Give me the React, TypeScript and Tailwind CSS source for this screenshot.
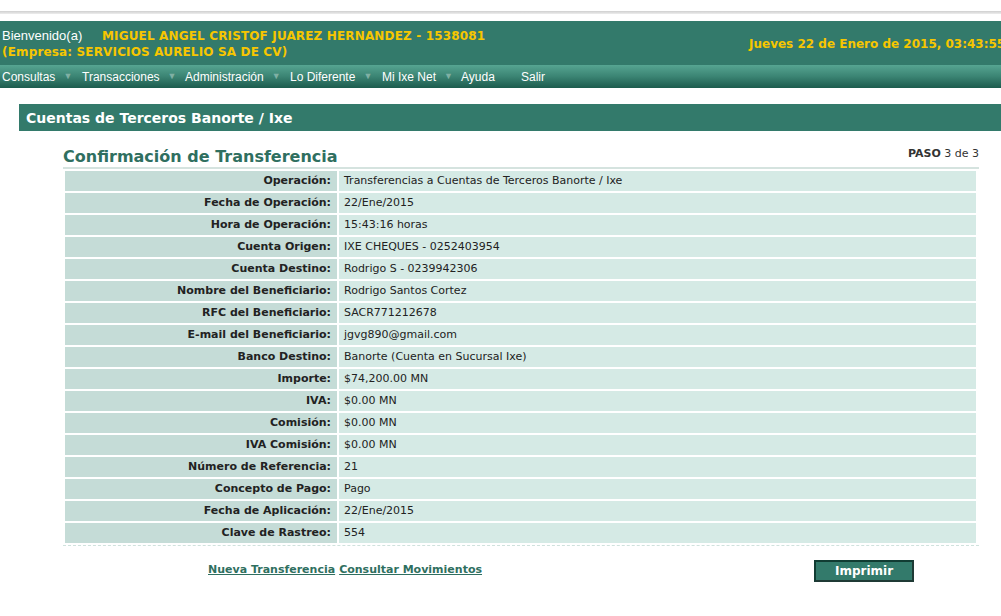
import React from 'react';

const rows: [string, string][] = [
  ['Operación:', 'Transferencias a Cuentas de Terceros Banorte / Ixe'],
  ['Fecha de Operación:', '22/Ene/2015'],
  ['Hora de Operación:', '15:43:16 horas'],
  ['Cuenta Origen:', 'IXE CHEQUES - 0252403954'],
  ['Cuenta Destino:', 'Rodrigo S - 0239942306'],
  ['Nombre del Beneficiario:', 'Rodrigo Santos Cortez'],
  ['RFC del Beneficiario:', 'SACR771212678'],
  ['E-mail del Beneficiario:', 'jgvg890@gmail.com'],
  ['Banco Destino:', 'Banorte (Cuenta en Sucursal Ixe)'],
  ['Importe:', '$74,200.00 MN'],
  ['IVA:', '$0.00 MN'],
  ['Comisión:', '$0.00 MN'],
  ['IVA Comisión:', '$0.00 MN'],
  ['Número de Referencia:', '21'],
  ['Concepto de Pago:', 'Pago'],
  ['Fecha de Aplicación:', '22/Ene/2015'],
  ['Clave de Rastreo:', '554'],
];

const menu = [
  { label: 'Consultas', arrow: true, w: 'w-[80px]' },
  { label: 'Transacciones', arrow: true, w: 'w-[103px]' },
  { label: 'Administración', arrow: true, w: 'w-[105px]' },
  { label: 'Lo Diferente', arrow: true, w: 'w-[92px]' },
  { label: 'Mi Ixe Net', arrow: true, w: 'w-[79px]' },
  { label: 'Ayuda', arrow: false, w: 'w-[60px]' },
  { label: 'Salir', arrow: false, w: 'w-[60px]' },
];

export default function App() {
  return (
    <div className="w-[1001px] h-[616px] overflow-hidden bg-white font-['DejaVu_Sans',Verdana,sans-serif]">
      {/* barra superior */}
      <div className="h-[11px]" />
      <div className="h-[3px] bg-gradient-to-b from-[#cfcfcf] to-[#ededed]" />
      <div className="h-[7px]" />

      {/* encabezado */}
      <div className="h-[44px] bg-[#337a6b] flex items-start relative">
        <div className="pt-[7px] pl-[2px] leading-[16px]">
          <div className="flex">
            <span className="font-['Liberation_Sans',Arial,sans-serif] text-[13px] text-white w-[100px]">Bienvenido(a)</span>
            <span className="text-[12px] font-bold text-[#f7c600] tracking-[0.15px]">MIGUEL ANGEL CRISTOF JUAREZ HERNANDEZ - 1538081</span>
          </div>
          <div className="text-[12px] font-bold text-[#f7c600] tracking-[0.15px]">(Empresa: SERVICIOS AURELIO SA DE CV)</div>
        </div>
        <div className="absolute left-[749px] top-[14px] whitespace-nowrap text-[12px] font-bold text-[#f7c600]">
          Jueves 22 de Enero de 2015, 03:43:55
        </div>
      </div>

      {/* menu */}
      <div className="h-[23px] bg-gradient-to-b from-[#56a592] via-[#3b8473] to-[#1c5c4e] flex items-center pl-[2px] font-['Liberation_Sans',Arial,sans-serif] text-[12px] text-white">
        {menu.map((m) => (
          <div key={m.label} className={`${m.w} flex items-center shrink-0`}>
            <span>{m.label}</span>
            {m.arrow && <span className="ml-[8px] text-[9px] text-[#7fb0a4]">▼</span>}
          </div>
        ))}
      </div>

      {/* titulo de seccion */}
      <div className="mt-[16px] ml-[19px] h-[27px] bg-[#337a6b] flex items-center pl-[7px] pt-[2px]">
        <span className="text-white font-bold text-[14px]">Cuentas de Terceros Banorte / Ixe</span>
      </div>

      {/* contenido */}
      <div className="ml-[63px] w-[916px] mt-[15px]">
        <div className="flex items-end justify-between border-b-2 border-[#d5e3df] pb-[1px]">
          <span className="text-[16px] font-bold text-[#2f6f60] leading-[19px]">Confirmación de Transferencia</span>
          <span className="text-[11px] text-[#333] mb-[3px]">
            <b>PASO</b> 3 de 3
          </span>
        </div>

        <table className="w-[915px] border-separate border-spacing-[2px] text-[11px] text-[#222]">
          <tbody>
            {rows.map(([k, v]) => (
              <tr key={k} className="h-[20px]">
                <td className="w-[272px] bg-[#c5dcd7] text-right font-bold pr-[6px] py-0 pt-[1px]">{k}</td>
                <td className="bg-[#d5eae5] pl-[5px] py-0 pt-[1px]">{v}</td>
              </tr>
            ))}
          </tbody>
        </table>
        <div className="border-t border-dashed border-[#cfe2dd]" />

        <div className="flex items-center mt-[14px]">
          <div className="w-[145px]" />
          <a href="#" className="text-[11px] font-bold text-[#2f6f60] underline">Nueva Transferencia</a>
          <a href="#" className="ml-[4px] text-[11px] font-bold text-[#2f6f60] underline">Consultar Movimientos</a>
          <button className="ml-[332px] w-[100px] h-[22px] bg-[#337a6b] border-[2px] border-t-[#113c33] border-l-[#113c33] border-r-[#1f3a35] border-b-[#1f3a35] text-white text-[12px] font-bold">
            Imprimir
          </button>
        </div>
      </div>
    </div>
  );
}
